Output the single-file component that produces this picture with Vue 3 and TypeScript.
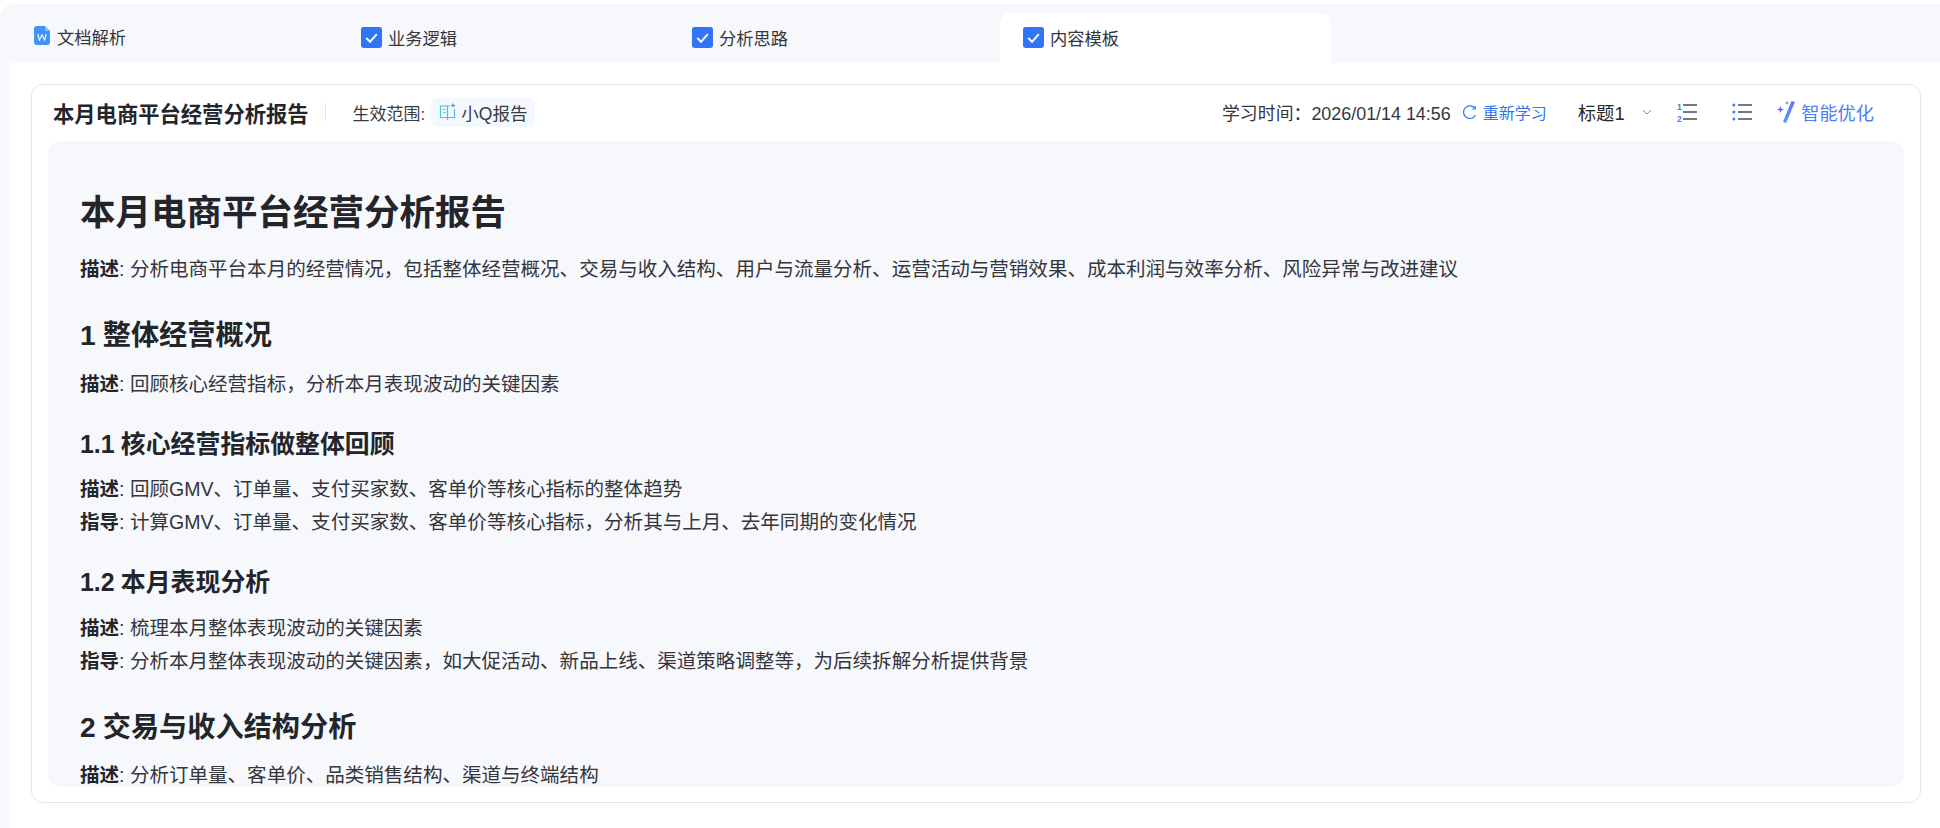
<script setup lang="ts">
const tabs = [
  { label: '业务逻辑', active: false },
  { label: '分析思路', active: false },
  { label: '内容模板', active: true },
]
type Block = { tag: 'h2' | 'h3' | 'p'; num?: string; text?: string; lines?: { k: string; v: string }[] }
const blocks: Block[] = [
  { tag: 'h2', num: '1', text: '整体经营概况' },
  { tag: 'p', lines: [{ k: '描述', v: '回顾核心经营指标，分析本月表现波动的关键因素' }] },
  { tag: 'h3', num: '1.1', text: '核心经营指标做整体回顾' },
  { tag: 'p', lines: [
    { k: '描述', v: '回顾GMV、订单量、支付买家数、客单价等核心指标的整体趋势' },
    { k: '指导', v: '计算GMV、订单量、支付买家数、客单价等核心指标，分析其与上月、去年同期的变化情况' },
  ] },
  { tag: 'h3', num: '1.2', text: '本月表现分析' },
  { tag: 'p', lines: [
    { k: '描述', v: '梳理本月整体表现波动的关键因素' },
    { k: '指导', v: '分析本月整体表现波动的关键因素，如大促活动、新品上线、渠道策略调整等，为后续拆解分析提供背景' },
  ] },
  { tag: 'h2', num: '2', text: '交易与收入结构分析' },
  { tag: 'p', lines: [{ k: '描述', v: '分析订单量、客单价、品类销售结构、渠道与终端结构' }] },
]
</script>

<template>
  <div class="page">
    <div class="shell">
      <div class="tabs">
        <div class="tab">
          <svg class="doc" width="16" height="19" viewBox="0 0 16 19">
            <path d="M3 0h8l5 5v11a3 3 0 0 1-3 3H3a3 3 0 0 1-3-3V3a3 3 0 0 1 3-3z" fill="#3f93fb" />
            <path d="M11 0l5 5h-3.500a1.500 1.500 0 0 1-1.500-1.500z" fill="#8cc0fd" />
            <path d="M3.800 8l1.600 6 2.600-5 2.600 5 1.600-6" fill="none" stroke="#fff" stroke-width="1.100" />
          </svg>
          <span class="tab-label">文档解析</span>
        </div>
        <div v-for="t in tabs" :key="t.label" class="tab" :class="{ active: t.active }">
          <svg class="check" width="21" height="21" viewBox="0 0 22 22">
            <rect width="22" height="22" rx="2.500" fill="#3174f6" />
            <path d="M5.500 11.500l4 4 7-8" fill="none" stroke="#fff" stroke-width="2" />
          </svg>
          <span class="tab-label">{{ t.label }}</span>
        </div>
      </div>
      <div class="panel">
        <div class="card">
          <div class="head">
            <span class="head-title">本月电商平台经营分析报告</span>
            <span class="divider"></span>
            <span class="scope">生效范围:</span>
            <span class="chip">
              <svg width="17" height="18" viewBox="0 0 17 18" fill="none" stroke="#45c6e4" stroke-width="1.200">
                <path d="M8.500 3H1.500v11.500h7V3z" />
                <path d="M8.500 3h2M15.500 6v8.500h-7" />
                <path d="M8.500 14.500V17M4 6.500h2.500M4 9.500h2.500" />
                <path d="M14 0.500v4M12 2.500h4" stroke="#2f9fd8" />
              </svg>
              小Q报告
            </span>
            <div class="head-right">
              <span class="learn">学习时间：2026/01/14 14:56</span>
              <span class="relearn">
                <svg width="15" height="15" viewBox="0 0 15 15" fill="none" stroke="#3174f6" stroke-width="1.200">
                  <path d="M13 3.500A6.300 6.300 0 1 0 13.500 10" />
                  <path d="M13.200 1v3h-3" />
                </svg>
                重新学习
              </span>
              <span class="level">标题1</span>
              <svg class="chev" width="10" height="6" viewBox="0 0 10 6" fill="none" stroke="#8a8f99" stroke-width="1">
                <path d="M1 1l4 4 4-4" />
              </svg>
              <svg class="ol" width="20" height="20" viewBox="0 0 20 20">
                <text x="0" y="7.500" font-size="8.500" font-weight="700" font-family="Liberation Sans" fill="#3f7ff6">1</text>
                <text x="0" y="19.500" font-size="8.500" font-weight="700" font-family="Liberation Sans" fill="#3f7ff6">2</text>
                <path d="M6 3h14M6 10h14M6 17h14" stroke="#4a4d55" stroke-width="1.300" />
              </svg>
              <svg class="ul" width="20" height="20" viewBox="0 0 20 20">
                <circle cx="1.800" cy="3" r="1.500" fill="#3f7ff6" />
                <circle cx="1.800" cy="10" r="1.500" fill="#3f7ff6" />
                <circle cx="1.800" cy="17" r="1.500" fill="#3f7ff6" />
                <path d="M6 3h14M6 10h14M6 17h14" stroke="#4a4d55" stroke-width="1.300" />
              </svg>
              <svg class="wand" width="20" height="24" viewBox="0 0 20 24">
                <defs>
                  <linearGradient id="wg" x1="0" y1="0" x2="0" y2="1">
                    <stop offset="0" stop-color="#6b6ff5" />
                    <stop offset="1" stop-color="#4f9bf8" />
                  </linearGradient>
                </defs>
                <path d="M15.500 1L19 2 10 23 7 22z" fill="url(#wg)" />
                <path d="M4.500 6l1 2.500L8 9.500 5.500 10.500 4.500 13 3.500 10.500 1 9.500 3.500 8.500z" fill="#5b6ff5" />
                <path d="M11 1l.6 1.400L13 3l-1.400.6L11 5l-.6-1.400L9 3l1.400-.6z" fill="#5b6ff5" />
              </svg>
              <span class="smart">智能优化</span>
            </div>
          </div>
          <div class="doc-body">
            <h1>本月电商平台经营分析报告</h1>
            <p class="lead"><b>描述</b>: 分析电商平台本月的经营情况，包括整体经营概况、交易与收入结构、用户与流量分析、运营活动与营销效果、成本利润与效率分析、风险异常与改进建议</p>
            <template v-for="(b, i) in blocks" :key="i">
              <h2 v-if="b.tag === 'h2'"><span class="num">{{ b.num }}</span>{{ b.text }}</h2>
              <h3 v-else-if="b.tag === 'h3'"><span class="num">{{ b.num }}</span>{{ b.text }}</h3>
              <div v-else class="para" :class="{ 'after-h2': blocks[i - 1]?.tag === 'h2' }">
                <p v-for="l in b.lines" :key="l.k"><b>{{ l.k }}</b>: {{ l.v }}</p>
              </div>
            </template>
          </div>
        </div>
      </div>
    </div>
  </div>
</template>

<style>
html, body { margin: 0; background: #fff; }
</style>

<style scoped>
.page {
  width: 1940px;
  height: 828px;
  overflow: hidden;
  padding-top: 4px;
  box-sizing: border-box;
  font-family: "Liberation Sans", "Noto Sans CJK SC", sans-serif;
  color: #26282e;
}
.shell {
  height: 824px;
  background: #f7f8fc;
  border-radius: 14px 0 0 0;
  display: flex;
  flex-direction: column;
}
.tabs {
  height: 59px;
  display: flex;
  align-items: flex-end;
  padding-left: 9px;
  flex: none;
}
.tab {
  width: 331px;
  height: 50px;
  box-sizing: border-box;
  padding-left: 23px;
  padding-bottom: 2px;
  display: flex;
  align-items: center;
  border-radius: 10px 10px 0 0;
}
.tab:first-child { width: 329px; padding-left: 25px; }
.tab.active { background: #fff; }
.doc { margin-right: 7px; margin-top: -3px; }
.check { margin-right: 6px; }
.tab-label { font-size: 17.300px; color: #34363c; }
.tab:first-child .tab-label { margin-top: -1px; }
.panel {
  flex: 1;
  margin-left: 9px;
  background: #fff;
  padding: 21px 19px 25px 22px;
  min-height: 0;
  display: flex;
}
.card {
  flex: 1;
  min-width: 0;
  border: 1px solid #e6e7eb;
  border-radius: 12px;
  padding: 0 16px 15px 16px;
  display: flex;
  flex-direction: column;
}
.head {
  height: 56px;
  padding-bottom: 2px;
  box-sizing: border-box;
  display: flex;
  align-items: center;
  flex: none;
  padding-left: 5px;
}
.head-title { font-size: 21.300px; font-weight: 600; color: #23252b; }
.divider { width: 1px; height: 18px; background: #e6e7eb; margin: 0 27px 0 16px; }
.scope { font-size: 17px; color: #3a3c42; }
.chip {
  margin-left: 6px;
  height: 29px;
  width: 104px;
  box-sizing: border-box;
  padding-left: 8px;
  background: #f3f7fe;
  border-radius: 7px;
  display: flex;
  align-items: center;
  gap: 5px;
  font-size: 17.500px;
  color: #3a3c42;
}
.head-right {
  margin-left: auto;
  display: flex;
  align-items: center;
  font-size: 17.900px;
  padding-right: 30px;
}
.learn { color: #34363c; }
.relearn {
  margin-left: 11px;
  display: flex;
  align-items: center;
  gap: 6px;
  font-size: 16px;
  color: #2f74f6;
}
.level { margin-left: 31px; color: #26282e; font-size: 18.400px; }
.chev { margin-left: 17.500px; }
.ol { margin-left: 25px; }
.ul { margin-left: 35px; }
.wand { margin-left: 24px; }
.smart { margin-left: 5px; font-size: 18.200px; color: #4f7cf8; }
.doc-body {
  flex: 1;
  min-height: 0;
  overflow: hidden;
  background: #f7f8fc;
  border-radius: 12px;
  padding: 0 32px;
}
h1 {
  margin: 48px 0 0;
  font-size: 35.500px;
  line-height: 48px;
  font-weight: 600;
  color: #23252b;
}
p { margin: 0; font-size: 19.550px; line-height: 33px; color: #34363c; }
b { font-weight: 600; color: #23252b; }
.lead { margin-top: 16px; }
h2 {
  margin: 29px 0 0;
  font-size: 28.200px;
  line-height: 40px;
  font-weight: 600;
  color: #23252b;
}
h3 {
  margin: 25px 0 0;
  font-size: 24.900px;
  line-height: 36px;
  font-weight: 600;
  color: #23252b;
}
.num { margin-right: 0.25em; }
.para { margin-top: 11.500px; }
.para.after-h2 { margin-top: 12.500px; }
</style>
